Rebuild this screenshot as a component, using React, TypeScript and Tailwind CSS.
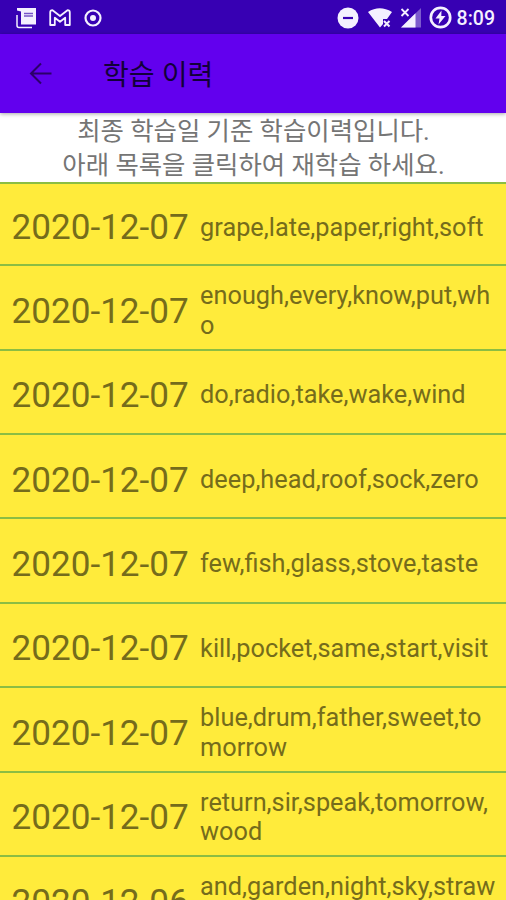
const history = [
  { date: '2020-12-07', words: 'grape,late,paper,right,soft' },
  { date: '2020-12-07', words: 'enough,every,know,put,who' },
  { date: '2020-12-07', words: 'do,radio,take,wake,wind' },
  { date: '2020-12-07', words: 'deep,head,roof,sock,zero' },
  { date: '2020-12-07', words: 'few,fish,glass,stove,taste' },
  { date: '2020-12-07', words: 'kill,pocket,same,start,visit' },
  { date: '2020-12-07', words: 'blue,drum,father,sweet,tomorrow' },
  { date: '2020-12-07', words: 'return,sir,speak,tomorrow,wood' },
  { date: '2020-12-06', words: 'and,garden,night,sky,straw' },
];

function StatusBar() {
  return (
    <div className="flex h-[34px] shrink-0 items-center justify-between bg-[#3700b3] pt-px text-[#f4f0ff]">
      <div className="ml-4 flex items-center">
        {/* news */}
        <svg width="21" height="22" viewBox="0 0 21 22" fill="none">
          <path d="M1 8v10.5q0 2 2 2h13" stroke="currentColor" strokeWidth="1.5" />
          <path d="M1 1h19v16.500H5V4.500L1 3.500z" fill="currentColor" />
          <path d="M8 6.500h9M8 9h9" stroke="#7654c6" strokeWidth="1.5" />
        </svg>
        {/* mail */}
        <svg className="ml-3" width="22" height="18" viewBox="0 0 22 18" fill="none" stroke="currentColor" strokeWidth="1.800" strokeLinejoin="round">
          <path d="M1.200 3.500Q1.200 1.200 3.500 1.200L11 7l7.500-5.800q2.300 0 2.300 2.300V16h-4.600V8.700L11 12.800 5.800 8.700V16H1.200z" />
        </svg>
        <svg className="ml-[13px]" width="18" height="18" viewBox="0 0 18 18" fill="none">
          <circle cx="9" cy="9" r="7.500" stroke="currentColor" strokeWidth="2.200" />
          <circle cx="9" cy="9" r="3" fill="currentColor" />
        </svg>
      </div>

      <div className="mr-[11px] flex items-center">
        {/* do not disturb */}
        <svg width="22" height="22" viewBox="0 0 22 22">
          <circle cx="11" cy="11" r="10.500" fill="currentColor" />
          <path d="M6 11h10" stroke="#3700b3" strokeWidth="2.200" />
        </svg>
        {/* wifi without connection */}
        <svg className="ml-2" width="26" height="22" viewBox="0 0 26 22">
          <path d="M1 5Q12.500-2.500 25 5L20 12H16v5l-3 3.500z" fill="currentColor" />
          <path d="M17 14l5.500 5.500m0-5.500l-5.500 5.500" stroke="currentColor" strokeWidth="2" />
        </svg>
        {/* mobile signal */}
        <svg className="ml-[7px]" width="22" height="22" viewBox="0 0 22 22">
          <path d="M1 20.500L21 1v19.500z" fill="#7c5acd" />
          <path d="M1 20.500L15.500 6.300v14.200z" fill="currentColor" />
          <path d="M1.500 2l7 7m0-7l-7 7" stroke="currentColor" strokeWidth="1.800" />
        </svg>
        {/* power */}
        <svg className="ml-[7px]" width="23" height="23" viewBox="0 0 23 23">
          <circle cx="11.500" cy="11.500" r="9.700" fill="none" stroke="currentColor" strokeWidth="2.700" />
          <path d="M12.500 4.500L6.500 12.500h4l-1 6 7-8.500h-4.200z" fill="currentColor" />
        </svg>
        <span className="ml-[5px] pt-0.5 text-[19.5px] leading-none font-medium">8:09</span>
      </div>
    </div>
  );
}

function AppBar() {
  return (
    <header className="relative z-10 flex h-[78.500px] shrink-0 items-center bg-[#6200ee] text-[#120039] shadow-[0_1px_4px_rgba(0,0,0,0.35)]">
      <button aria-label="뒤로" className="ml-7 text-[#2b0069]">
        <svg width="24" height="23" viewBox="0 0 24 23" fill="none" stroke="currentColor" strokeWidth="2">
          <path d="M23.500 11.500H3M13 1.500l-10 10 10 10" />
        </svg>
      </button>
      <h1 className="ml-[51px] pt-1.5 text-[28.1px] leading-none">학습 이력</h1>
    </header>
  );
}

export default function App() {
  return (
    <div className="flex h-screen w-full flex-col overflow-hidden bg-white font-['Roboto','Noto_Sans_CJK_KR',sans-serif]">
      <StatusBar />
      <AppBar />
      <p className="h-[69px] shrink-0 pt-px pl-px text-center text-[25.4px] leading-[34px] text-[#757575]">
        최종 학습일 기준 학습이력입니다.
        <br />
        아래 목록을 클릭하여 재학습 하세요.
      </p>
      <ul className="shrink-0 border-t-2 border-[#8bbd43]">
        {history.map((item, i) => (
          <li
            key={i}
            className="flex h-[84.4px] items-center border-b-2 border-[#8bbd43] bg-[#ffeb3b] pt-[7px] pl-[11.6px] text-[#756c1b] first:h-[82.7px]"
          >
            <span className="w-[188.5px] shrink-0 pt-px text-[35.1px] leading-none">{item.date}</span>
            <span className="w-[296px] text-[25.3px] leading-[29.6px] break-all [li:last-child>&]:min-h-[59px]">
              {item.words}
            </span>
          </li>
        ))}
      </ul>
    </div>
  );
}
